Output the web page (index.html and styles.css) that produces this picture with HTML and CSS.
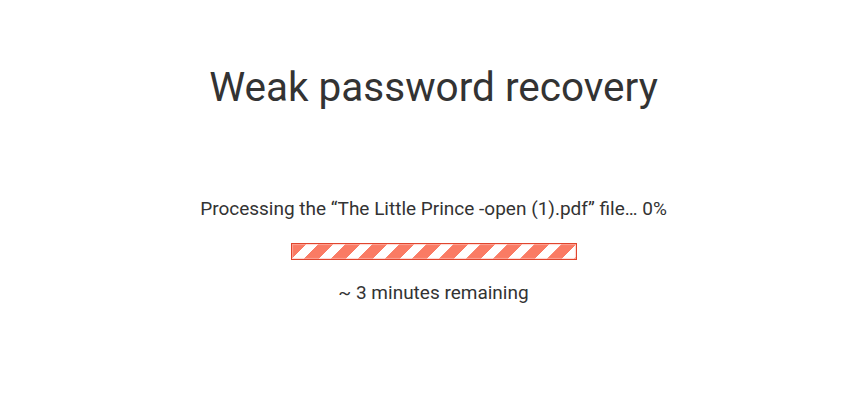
FILE: index.html
```html
<!DOCTYPE html>
<html>
<head>
<meta charset="utf-8">
<link rel="stylesheet" href="styles.css">
</head>
<body>
<main class="page">
  <h1 class="title">Weak password recovery</h1>
  <p class="status">Processing the “The Little Prince -open (1).pdf” file… 0%</p>
  <div class="bar"></div>
  <p class="remaining">~ 3 minutes remaining</p>
</main>
</body>
</html>
```
FILE: styles.css
```css
html, body {
  margin: 0;
  padding: 0;
  background: #ffffff;
}
.page {
  display: flex;
  flex-direction: column;
  align-items: center;
  font-family: Roboto, "Liberation Sans", sans-serif;
  color: #333333;
  padding-top: 63px;
}
.title {
  margin: 0;
  font-size: 40.5px;
  line-height: 48px;
  font-weight: 400;
}
.status {
  margin: 87px 0 0;
  font-size: 19px;
  line-height: 22px;
}
.bar {
  margin-top: 23px;
  width: 286px;
  height: 17px;
  box-sizing: border-box;
  border: 1px solid #e0452e;
  background-color: #fa7b64;
  background-image: repeating-linear-gradient(135deg, #fa7b64 0px, #fa7b64 10px, #ffffff 10.5px, #ffffff 18.5px, #fa7b64 19.1px);
  box-shadow: inset 0 0 1px 1px rgba(255, 190, 180, 0.6);
}
.remaining {
  margin: 22px 0 0;
  font-size: 19px;
  line-height: 22px;
}
```
